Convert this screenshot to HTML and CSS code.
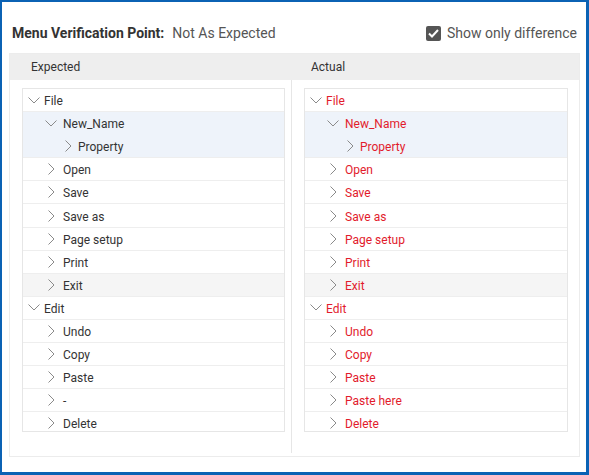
FILE: index.html
```html
<!DOCTYPE html>
<html>
<head>
<meta charset="utf-8">
<link rel="stylesheet" href="styles.css">
</head>
<body>
<div class="frame">
  <div class="titlebar">
    <div class="title"><span class="label">Menu Verification Point:</span><span class="status">Not As Expected</span></div>
    <label class="toggle"><span class="box"><svg width="11" height="9" viewBox="0 0 11 9"><path d="M1 4.5 L4 7.5 L10 1" fill="none" stroke="#fff" stroke-width="2"/></svg></span>Show only difference</label>
  </div>
  <div class="panel">
    <div class="head">
      <div class="hcell left">Expected</div>
      <div class="hcell right">Actual</div>
    </div>
    <div class="cols">
      <div class="col left">
        <div class="tree">
          <div class="row l0"><span class="ic"><svg width="12" height="7" viewBox="0 0 12 7"><path d="M0.5 0.5 L6 6 L11.5 0.5"/></svg></span><span class="tx">File</span></div>
          <div class="row l1 sel"><span class="ic"><svg width="12" height="7" viewBox="0 0 12 7"><path d="M0.5 0.5 L6 6 L11.5 0.5"/></svg></span><span class="tx">New_Name</span></div>
          <div class="row l2 sel last"><span class="ic"><svg width="7" height="12" viewBox="0 0 7 12"><path d="M0.5 0.5 L6 6 L0.5 11.5"/></svg></span><span class="tx">Property</span></div>
          <div class="row l1"><span class="ic"><svg width="7" height="12" viewBox="0 0 7 12"><path d="M0.5 0.5 L6 6 L0.5 11.5"/></svg></span><span class="tx">Open</span></div>
          <div class="row l1"><span class="ic"><svg width="7" height="12" viewBox="0 0 7 12"><path d="M0.5 0.5 L6 6 L0.5 11.5"/></svg></span><span class="tx">Save</span></div>
          <div class="row l1"><span class="ic"><svg width="7" height="12" viewBox="0 0 7 12"><path d="M0.5 0.5 L6 6 L0.5 11.5"/></svg></span><span class="tx">Save as</span></div>
          <div class="row l1"><span class="ic"><svg width="7" height="12" viewBox="0 0 7 12"><path d="M0.5 0.5 L6 6 L0.5 11.5"/></svg></span><span class="tx">Page setup</span></div>
          <div class="row l1"><span class="ic"><svg width="7" height="12" viewBox="0 0 7 12"><path d="M0.5 0.5 L6 6 L0.5 11.5"/></svg></span><span class="tx">Print</span></div>
          <div class="row l1 hover"><span class="ic"><svg width="7" height="12" viewBox="0 0 7 12"><path d="M0.5 0.5 L6 6 L0.5 11.5"/></svg></span><span class="tx">Exit</span></div>
          <div class="row l0"><span class="ic"><svg width="12" height="7" viewBox="0 0 12 7"><path d="M0.5 0.5 L6 6 L11.5 0.5"/></svg></span><span class="tx">Edit</span></div>
          <div class="row l1"><span class="ic"><svg width="7" height="12" viewBox="0 0 7 12"><path d="M0.5 0.5 L6 6 L0.5 11.5"/></svg></span><span class="tx">Undo</span></div>
          <div class="row l1"><span class="ic"><svg width="7" height="12" viewBox="0 0 7 12"><path d="M0.5 0.5 L6 6 L0.5 11.5"/></svg></span><span class="tx">Copy</span></div>
          <div class="row l1"><span class="ic"><svg width="7" height="12" viewBox="0 0 7 12"><path d="M0.5 0.5 L6 6 L0.5 11.5"/></svg></span><span class="tx">Paste</span></div>
          <div class="row l1"><span class="ic"><svg width="7" height="12" viewBox="0 0 7 12"><path d="M0.5 0.5 L6 6 L0.5 11.5"/></svg></span><span class="tx">-</span></div>
          <div class="row l1"><span class="ic"><svg width="7" height="12" viewBox="0 0 7 12"><path d="M0.5 0.5 L6 6 L0.5 11.5"/></svg></span><span class="tx">Delete</span></div>
        </div>
      </div>
      <div class="col right">
        <div class="tree diff">
          <div class="row l0"><span class="ic"><svg width="12" height="7" viewBox="0 0 12 7"><path d="M0.5 0.5 L6 6 L11.5 0.5"/></svg></span><span class="tx">File</span></div>
          <div class="row l1 sel"><span class="ic"><svg width="12" height="7" viewBox="0 0 12 7"><path d="M0.5 0.5 L6 6 L11.5 0.5"/></svg></span><span class="tx">New_Name</span></div>
          <div class="row l2 sel last"><span class="ic"><svg width="7" height="12" viewBox="0 0 7 12"><path d="M0.5 0.5 L6 6 L0.5 11.5"/></svg></span><span class="tx">Property</span></div>
          <div class="row l1"><span class="ic"><svg width="7" height="12" viewBox="0 0 7 12"><path d="M0.5 0.5 L6 6 L0.5 11.5"/></svg></span><span class="tx">Open</span></div>
          <div class="row l1"><span class="ic"><svg width="7" height="12" viewBox="0 0 7 12"><path d="M0.5 0.5 L6 6 L0.5 11.5"/></svg></span><span class="tx">Save</span></div>
          <div class="row l1"><span class="ic"><svg width="7" height="12" viewBox="0 0 7 12"><path d="M0.5 0.5 L6 6 L0.5 11.5"/></svg></span><span class="tx">Save as</span></div>
          <div class="row l1"><span class="ic"><svg width="7" height="12" viewBox="0 0 7 12"><path d="M0.5 0.5 L6 6 L0.5 11.5"/></svg></span><span class="tx">Page setup</span></div>
          <div class="row l1"><span class="ic"><svg width="7" height="12" viewBox="0 0 7 12"><path d="M0.5 0.5 L6 6 L0.5 11.5"/></svg></span><span class="tx">Print</span></div>
          <div class="row l1 hover"><span class="ic"><svg width="7" height="12" viewBox="0 0 7 12"><path d="M0.5 0.5 L6 6 L0.5 11.5"/></svg></span><span class="tx">Exit</span></div>
          <div class="row l0"><span class="ic"><svg width="12" height="7" viewBox="0 0 12 7"><path d="M0.5 0.5 L6 6 L11.5 0.5"/></svg></span><span class="tx">Edit</span></div>
          <div class="row l1"><span class="ic"><svg width="7" height="12" viewBox="0 0 7 12"><path d="M0.5 0.5 L6 6 L0.5 11.5"/></svg></span><span class="tx">Undo</span></div>
          <div class="row l1"><span class="ic"><svg width="7" height="12" viewBox="0 0 7 12"><path d="M0.5 0.5 L6 6 L0.5 11.5"/></svg></span><span class="tx">Copy</span></div>
          <div class="row l1"><span class="ic"><svg width="7" height="12" viewBox="0 0 7 12"><path d="M0.5 0.5 L6 6 L0.5 11.5"/></svg></span><span class="tx">Paste</span></div>
          <div class="row l1"><span class="ic"><svg width="7" height="12" viewBox="0 0 7 12"><path d="M0.5 0.5 L6 6 L0.5 11.5"/></svg></span><span class="tx">Paste here</span></div>
          <div class="row l1"><span class="ic"><svg width="7" height="12" viewBox="0 0 7 12"><path d="M0.5 0.5 L6 6 L0.5 11.5"/></svg></span><span class="tx">Delete</span></div>
        </div>
      </div>
    </div>
  </div>
</div>
</body>
</html>
```
FILE: styles.css
```css
* { box-sizing: border-box; }
html, body { margin: 0; padding: 0; background: #fff; }
body { font-family: Roboto, "Liberation Sans", sans-serif; }

.frame {
  width: 589px;
  height: 475px;
  border-style: solid;
  border-color: #0b62b4;
  border-width: 2px 3px 3px 2px;
  display: flex;
  flex-direction: column;
}

.titlebar {
  height: 51px;
  display: flex;
  align-items: flex-end;
  justify-content: space-between;
  padding: 0 9px 12px 10px;
}
.title { font-size: 14px; line-height: 16px; color: #555; }
.title .label { font-weight: bold; color: #333; margin-right: 8px; }
.toggle { display: flex; align-items: center; font-size: 14px; line-height: 16px; color: #555; }
.toggle .box {
  width: 15px; height: 15px; border-radius: 2px; background: #555;
  display: flex; align-items: center; justify-content: center;
  margin-right: 6px;
}

.panel {
  margin: 0 6px 0 7px;
  height: 404px;
  border: 1px solid #ececec;
  padding-bottom: 3px;
  display: flex;
  flex-direction: column;
}
.head {
  height: 26px;
  background: #eeeeee;
  display: grid;
  grid-template-columns: 281px 1fr;
  align-items: center;
  font-size: 12px;
  color: #333;
}
.hcell.left { padding-left: 21px; }
.hcell.right { padding-left: 20px; }

.cols {
  flex: 1;
  display: grid;
  grid-template-columns: 281px 1fr;
}
.col { padding-top: 8px; }
.col.left { padding-left: 12px; padding-right: 6px; }
.col.right { border-left: 1px solid #e6e6e6; padding-left: 12px; padding-right: 11px; }

.tree {
  height: 344px;
  border: 1px solid #e6e6e6;
  overflow: hidden;
  font-size: 12px;
  color: #333;
}
.tree.diff { color: #e21b2c; }

.row {
  height: 23.1px;
  display: flex;
  align-items: center;
  border-bottom: 1px solid #eeeeee;
}
.row.sel { background: #eef3fa; border-bottom-color: transparent; }
.row.sel.last { border-bottom-color: #eeeeee; }
.row.hover { background: #f5f5f5; }

.tx { padding-top: 2px; }
.ic { width: 12px; height: 12px; display: flex; align-items: center; justify-content: center; }
.ic svg { display: block; }
.ic path { fill: none; stroke: #8a8a8a; stroke-width: 1; }

.row.l0 { padding-left: 5px; }
.row.l0 .tx { margin-left: 4px; }
.row.l1 { padding-left: 22px; }
.row.l1 .tx { margin-left: 6px; }
.row.l2 { padding-left: 39px; }
.row.l2 .tx { margin-left: 4px; }
```
